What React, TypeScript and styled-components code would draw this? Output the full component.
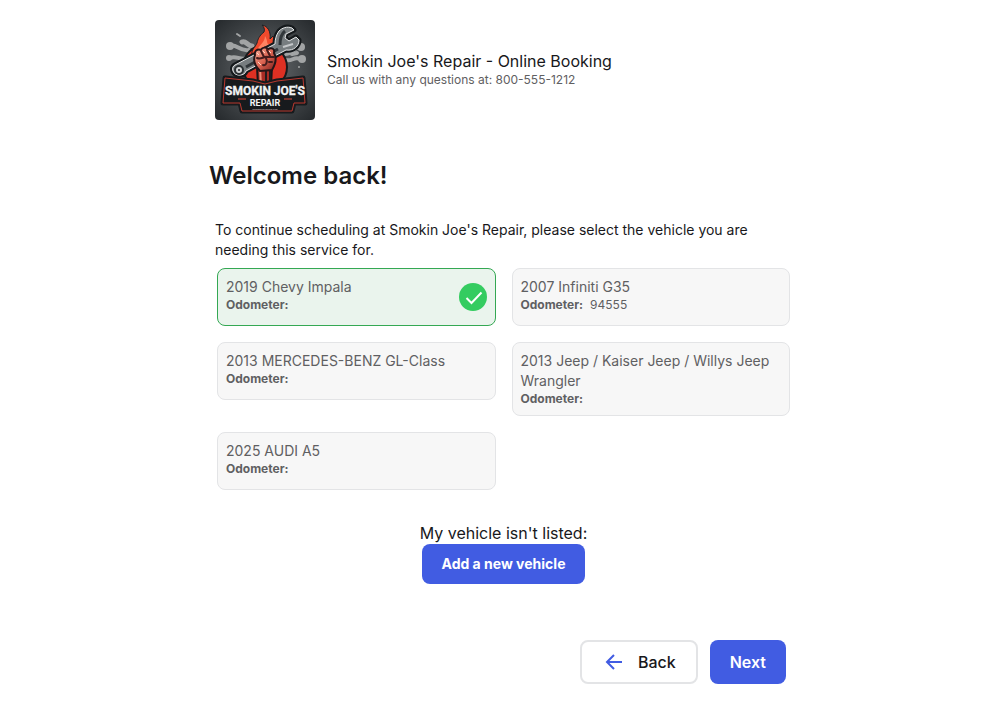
import React, { useState } from "react";
import styled, { createGlobalStyle } from "styled-components";

const GlobalStyle = createGlobalStyle`
  *, *::before, *::after { box-sizing: border-box; }
  body { margin: 0; background: #ffffff; color: #18181b; font-family: Inter, "Liberation Sans", sans-serif; }
  button, input { font: inherit; }
`;

const Page = styled.main`
  width: 60%;
  min-width: 560px;
  margin: 0 auto;
  padding: 20px 6px 28px 10px;
`;

const Header = styled.header`
  display: flex;
  align-items: center;
  gap: 12px;
  padding-left: 6px;
`;

const LogoImage = styled.svg`
  flex: none;
  width: 100px;
  height: 100px;
  border-radius: 4px;
`;

const ShopName = styled.div`
  font-size: 16px;
  line-height: 20px;
`;

const ShopPhone = styled.div`
  font-size: 12px;
  line-height: 18px;
  color: #5f6062;
`;

const Title = styled.h1`
  margin: 40px 0 0;
  font-size: 24px;
  line-height: 32px;
  font-weight: 600;
`;

const Picker = styled.fieldset`
  margin: 28px 0 0;
  padding: 0;
  border: 0;
  min-width: 0;
`;

const Prompt = styled.legend`
  padding: 0 20px 8px 6px;
  font-size: 14px;
  line-height: 20px;
`;

const Vehicles = styled.div`
  display: grid;
  grid-template-columns: 1fr 1fr;
  align-items: start;
  gap: 16px;
  padding-left: 8px;
`;

const VehicleCard = styled.label<{ $selected: boolean }>`
  position: relative;
  display: flex;
  align-items: center;
  justify-content: space-between;
  min-height: 58px;
  padding: 8px;
  border: 1px solid ${(p) => (p.$selected ? "#34a853" : "#e3e4e6")};
  border-radius: 8px;
  background: ${(p) => (p.$selected ? "#eaf4ed" : "#f7f7f7")};
  color: #5f6062;
  cursor: pointer;

  &:focus-within { outline: 2px solid #a9b7f5; }
`;

const VehicleDetails = styled.div`
  align-self: flex-start;
`;

const HiddenRadio = styled.input`
  position: absolute;
  opacity: 0;
  width: 1px;
  height: 1px;
  margin: 0;
`;

const VehicleName = styled.div`
  font-size: 14px;
  line-height: 20px;
`;

const Odometer = styled.div`
  display: flex;
  gap: 7px;
  font-size: 12px;
  line-height: 16px;
`;

const OdometerLabel = styled.span`
  font-weight: 700;
`;

const CheckIcon = styled.svg`
  flex: none;
  width: 28px;
  height: 28px;
`;

const AddSection = styled.section`
  display: flex;
  flex-direction: column;
  align-items: center;
  margin-top: 32px;
  padding-left: 8px;
  font-size: 16px;
  line-height: 22px;
`;

const Button = styled.button<{ $outlined?: boolean; $small?: boolean }>`
  display: inline-flex;
  align-items: center;
  justify-content: center;
  gap: 12px;
  height: ${(p) => (p.$small ? "40px" : "44px")};
  padding: 0 20px;
  border: ${(p) => (p.$outlined ? "2px solid #e3e4e6" : "0")};
  border-radius: 8px;
  background: ${(p) => (p.$outlined ? "#ffffff" : "#415ce2")};
  color: ${(p) => (p.$outlined ? "#18181b" : "#ffffff")};
  font-size: ${(p) => (p.$small ? "14px" : "16px")};
  font-weight: ${(p) => (p.$outlined ? 500 : p.$small ? 700 : 600)};
  cursor: pointer;
`;

const ArrowIcon = styled.svg`
  width: 24px;
  height: 24px;
`;

const Actions = styled.footer`
  display: flex;
  justify-content: flex-end;
  gap: 12px;
  margin-top: 56px;
  padding-right: 4px;
`;

const Lettering = styled.text<{ $size: number }>`
  font-family: Roboto, "Liberation Sans", sans-serif;
  font-weight: 700;
  font-size: ${(p) => p.$size}px;
  text-anchor: middle;
`;

const wrench =
  "M20 45L60 24C60 20 61 15 64 11C67 8 72 6 77 8L79 10L71 14L70 18L74 21L81 17L84 20C84 26 79 31 71 30L31 51C30 56 20 57 18 51C17 48 18 46 20 45Z";
const flame =
  "M37 36C36 29 40 28 42 23C43 19 44 16 49 12C50 9 49 7 47 5C53 6 56 12 55 19L58 16C60 21 63 22 61 28L57 35Z";
const banner =
  "M10 58L38 61L50 64L62 61L88 58L90 83H79L77 91H27L25 83H8Z";

function Logo() {
  return (
    <LogoImage viewBox="0 0 100 100" role="img" aria-label="Smokin Joe's Repair logo">
      <defs>
        <radialGradient id="backdrop" cx="50%" cy="50%" r="70%">
          <stop offset="0" stopColor="#686c6f" />
          <stop offset="0.5" stopColor="#464a4d" />
          <stop offset="1" stopColor="#25292c" />
        </radialGradient>
        <linearGradient id="skin" x1="0" y1="0" x2="1" y2="1">
          <stop offset="0" stopColor="#f5b09b" />
          <stop offset="0.5" stopColor="#dc6552" />
          <stop offset="1" stopColor="#7d1c19" />
        </linearGradient>
      </defs>
      <rect width="100" height="100" fill="url(#backdrop)" />

      <g fill="none" stroke="#a2a4a5" strokeWidth="4" strokeLinecap="round">
        <path d="M15 26C21 23 25 32 34 30" />
        <path d="M15 38C22 35 24 41 34 38" />
        <path d="M27 22C31 20 32 26 37 26" strokeWidth="5" />
        <path d="M22 14L25 16" strokeWidth="2" />
        <path d="M84 27C79 27 78 35 68 34" />
        <path d="M85 39C79 36 77 42 71 40" />
        <path d="M77 34L82 33" />
      </g>
      <g fill="#a2a4a5">
        <circle cx="15" cy="26" r="4" />
        <circle cx="14" cy="38" r="3" />
        <circle cx="86" cy="27" r="4" />
        <circle cx="87" cy="39" r="4" />
        <circle cx="84" cy="47" r="1" />
      </g>

      <circle cx="50" cy="47" r="22" fill="#de3023" stroke="#191b1d" strokeWidth="2" />
      <path d={flame} fill="#f04a2d" stroke="#202326" strokeWidth="1" />
      <path d="M43 32C41 26 50 24 50 16C54 22 50 26 57 23C58 30 53 32 50 34Z" fill="#ff8362" />
      <path d="M42 47H57L56 66H43Z" fill="#a82b24" stroke="#191719" strokeWidth="2" />
      <path d="M45 48L46 65" stroke="#ed8b78" strokeWidth="2" />
      <path d="M51 49V65M55 51V64" stroke="#231b1d" strokeWidth="2" />

      <path d={wrench} fill="#777d80" stroke="#15191c" strokeWidth="5" strokeLinejoin="round" />
      <path d={wrench} fill="#777d80" stroke="#e4e6e7" strokeWidth="1" strokeLinejoin="round" />
      <path d="M31 47L63 29M65 25C65 18 66 14 70 11" fill="none" stroke="#30363a" strokeWidth="3" />
      <path d="M68 27L78 24" stroke="#c4c7c9" strokeWidth="2" />
      <circle cx="24" cy="50" r="4" fill="#d1d4d5" stroke="#292f32" strokeWidth="2" />
      <circle cx="24" cy="50" r="1" fill="#202528" />

      <path d="M40 35C39 30 43 29 46 30C47 27 51 27 53 29C57 27 60 29 59 33C62 38 60 45 57 50L45 51C40 46 38 40 40 35Z" fill="url(#skin)" stroke="#251517" strokeWidth="2" />
      <path d="M46 31L49 37M52 30L55 36M42 38C46 40 49 36 53 37L59 37M51 38C53 42 51 46 48 45M54 42L57 42" fill="none" stroke="#451c1c" strokeWidth="2" strokeLinecap="round" />
      <path d="M42 33L44 35M48 31L50 33M54 31L56 33M43 42L46 45" stroke="#ffd8c6" strokeWidth="1" />

      <path d={banner} fill="#171a1d" stroke="#171a1d" strokeWidth="5" strokeLinejoin="round" />
      <path d={banner} fill="#171a1d" stroke="#b9382f" strokeWidth="1" strokeLinejoin="round" />
      <path d="M23 79H31M69 79H77" stroke="#e34a3d" strokeWidth="1" />
      <Lettering $size={12} x="50" y="75" fill="#f1f2f3" stroke="#f1f2f3" strokeWidth="0.300">SMOKIN JOE'S</Lettering>
      <Lettering $size={9} x="50" y="86" fill="#f3f4f4">REPAIR</Lettering>
      <Lettering $size={2} x="50" y="90" fill="#c0b4b0">AUTOMOTIVE REPAIR SHOP</Lettering>
    </LogoImage>
  );
}

const vehicles = [
  { name: "2019 Chevy Impala", odometer: "" },
  { name: "2007 Infiniti G35", odometer: "94555" },
  { name: "2013 MERCEDES-BENZ GL-Class", odometer: "" },
  { name: "2013 Jeep / Kaiser Jeep / Willys Jeep Wrangler", odometer: "" },
  { name: "2025 AUDI A5", odometer: "" },
];

export default function App() {
  const [selected, setSelected] = useState(0);
  return (
    <>
      <GlobalStyle />
      <Page>
        <Header>
          <Logo />
          <div>
            <ShopName>Smokin Joe's Repair - Online Booking</ShopName>
            <ShopPhone>Call us with any questions at: 800-555-1212</ShopPhone>
          </div>
        </Header>
        <Title>Welcome back!</Title>
        <Picker>
          <Prompt>
            To continue scheduling at Smokin Joe's Repair, please select the vehicle you are needing this service for.
          </Prompt>
          <Vehicles>
            {vehicles.map((vehicle, index) => (
              <VehicleCard key={vehicle.name} $selected={index === selected}>
                <HiddenRadio
                  type="radio"
                  name="vehicle"
                  checked={index === selected}
                  onChange={() => setSelected(index)}
                />
                <VehicleDetails>
                  <VehicleName>{vehicle.name}</VehicleName>
                  <Odometer>
                    <OdometerLabel>Odometer:</OdometerLabel>
                    {vehicle.odometer && <span>{vehicle.odometer}</span>}
                  </Odometer>
                </VehicleDetails>
                {index === selected && (
                  <CheckIcon viewBox="0 0 28 28" aria-hidden="true">
                    <circle cx="14" cy="14" r="14" fill="#34cc60" />
                    <path d="M7.500 15L12.500 20L22.500 9.500" fill="none" stroke="#ffffff" strokeWidth="2" />
                  </CheckIcon>
                )}
              </VehicleCard>
            ))}
          </Vehicles>
        </Picker>
        <AddSection>
          <span>My vehicle isn't listed:</span>
          <Button type="button" $small>Add a new vehicle</Button>
        </AddSection>
        <Actions>
          <Button type="button" $outlined>
            <ArrowIcon viewBox="0 0 24 24" fill="none" stroke="#415ce2" strokeWidth="2" aria-hidden="true">
              <path d="M20 12H5M12 5L5 12L12 19" />
            </ArrowIcon>
            Back
          </Button>
          <Button type="button">Next</Button>
        </Actions>
      </Page>
    </>
  );
}
